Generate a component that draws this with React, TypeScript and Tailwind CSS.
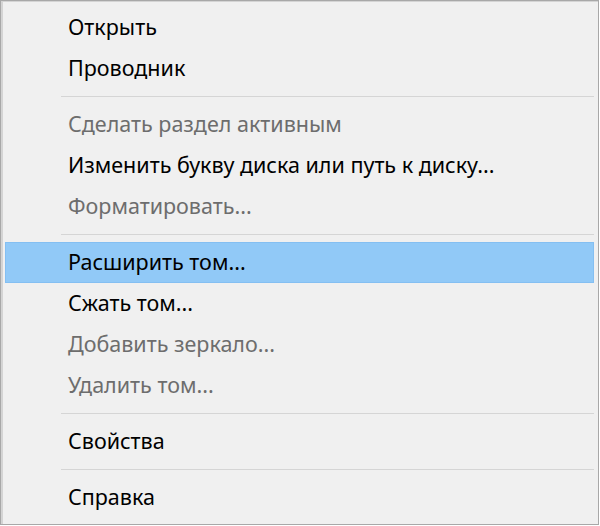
type Item = { label: string; disabled?: boolean; active?: boolean } | "sep";

const items: Item[] = [
  { label: "Открыть" },
  { label: "Проводник" },
  "sep",
  { label: "Сделать раздел активным", disabled: true },
  { label: "Изменить букву диска или путь к диску..." },
  { label: "Форматировать...", disabled: true },
  "sep",
  { label: "Расширить том...", active: true },
  { label: "Сжать том..." },
  { label: "Добавить зеркало...", disabled: true },
  { label: "Удалить том...", disabled: true },
  "sep",
  { label: "Свойства" },
  "sep",
  { label: "Справка" },
];

export default function App() {
  return (
    <div className="h-[526px] w-[600px] bg-white">
      <div className="h-[525px] w-[599px] border border-[#a8a8a8] bg-[#f0f0f0] shadow-[inset_2px_1px_0_#d4d4d4] pl-[4px] pr-[4px] pt-[6px] font-['Noto_Sans',sans-serif] text-[21.5px]">
        {items.map((it, i) =>
          it === "sep" ? (
            <div key={i} className="flex h-[15px] items-center pl-[56px]">
              <div className="h-[2px] w-full border-t border-[#d5d5d5] border-b-white" />
            </div>
          ) : (
            <div
              key={i}
              className={
                "flex h-[41px] items-center " +
                (it.active ? "border border-[#84bff2] bg-[#91c9f7] pl-[62px] " : "pl-[63px] ") +
                (it.disabled ? "text-[#6d6d6d]" : "text-black")
              }
            >
              {it.label}
            </div>
          )
        )}
      </div>
    </div>
  );
}
